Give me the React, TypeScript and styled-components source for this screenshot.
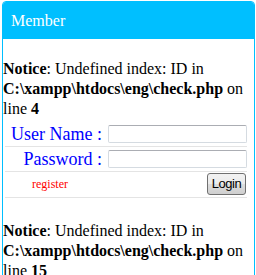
import styled, { createGlobalStyle } from "styled-components";

const GlobalStyle = createGlobalStyle`
  body {
    margin: 0;
    background: #ffffff;
    font-family: "Liberation Serif", "Times New Roman", serif;
    font-size: 16px;
    line-height: 20px;
    color: #000000;
  }
`;

function App() {
  return (
    <>
      <GlobalStyle />
      <Panel>
        <Heading>Member</Heading>
        <Body>
          <Notice line="4" />
          <LoginForm>
            <FormRow $pad="5px 0 2px">
              <Label>User Name :</Label>
              <Input type="text" />
            </FormRow>
            <FormRow $pad="2px 0">
              <Label>Password :</Label>
              <Input type="password" />
            </FormRow>
            <FormRow $pad="1px 0 2px">
              <RegisterLink>register</RegisterLink>
              <ButtonCell>
                <LoginButton type="button">Login</LoginButton>
              </ButtonCell>
            </FormRow>
          </LoginForm>
          <Notice line="15" $gap={3} />
        </Body>
      </Panel>
    </>
  );
}

type NoticeProps = {
  line: string;
  $gap?: number;
};

function Notice(props: NoticeProps) {
  const { line, $gap } = props;
  return (
    <NoticeText $gap={$gap}>
      <b>Notice</b>: Undefined index: ID in <b>C:\xampp\htdocs\eng\check.php</b> on line{" "}
      <b>{line}</b>
    </NoticeText>
  );
}

export default App;

const Panel = styled.div`
  margin: 1px 1px 0 2px;
  border: 1px solid #00bfff;
  border-radius: 4px;
  background: #ffffff;
`;

const Heading = styled.div`
  background-color: #00bfff;
  color: #ffffff;
  padding: 9px 8px 8px;
  border-radius: 3px 3px 0 0;
  font-size: 16px;
  line-height: 20px;
`;

const Body = styled.div`
  padding: 0;
`;

const NoticeText = styled.div<{ $gap?: number }>`
  margin-top: ${(p) => p.$gap || 0}px;
  padding-top: 20px;

  b {
    font-weight: bold;
  }
`;

const LoginForm = styled.div`
  margin-left: 2px;
  width: 242px;
`;

const FormRow = styled.div<{ $pad: string }>`
  display: grid;
  grid-template-columns: 100px 1fr;
  align-items: center;
  padding: ${(p) => p.$pad};
  border-bottom: 1px solid #e4e4e4;
`;

const Label = styled.div`
  color: #0000ff;
  font-size: 18px;
  line-height: 20px;
  text-align: right;
  padding-right: 3px;
  white-space: nowrap;
`;

const Input = styled.input`
  box-sizing: border-box;
  margin: 0 0 0 3px;
  width: 139px;
  height: 18px;
  padding: 0 2px;
  border: 1px solid #d5dbe1;
  border-top-color: #abadb3;
  border-radius: 2px;
  background: #ffffff;
  outline: none;
`;

const RegisterLink = styled.a`
  color: #ff0000;
  font-size: 12px;
  line-height: 14px;
  padding-left: 27px;
  text-decoration: none;
`;

const ButtonCell = styled.div`
  display: flex;
  justify-content: flex-end;
  padding-right: 1px;
`;

const LoginButton = styled.button`
  box-sizing: border-box;
  width: 39px;
  height: 22px;
  padding: 0;
  border: 1px solid #707070;
  border-radius: 3px;
  background: linear-gradient(#f2f2f2 0%, #ebebeb 50%, #dddddd 51%, #cfcfcf 100%);
  color: #000000;
  font-family: "Liberation Sans", Arial, sans-serif;
  font-size: 13px;
  letter-spacing: -0.5px;
  line-height: 20px;
`;
